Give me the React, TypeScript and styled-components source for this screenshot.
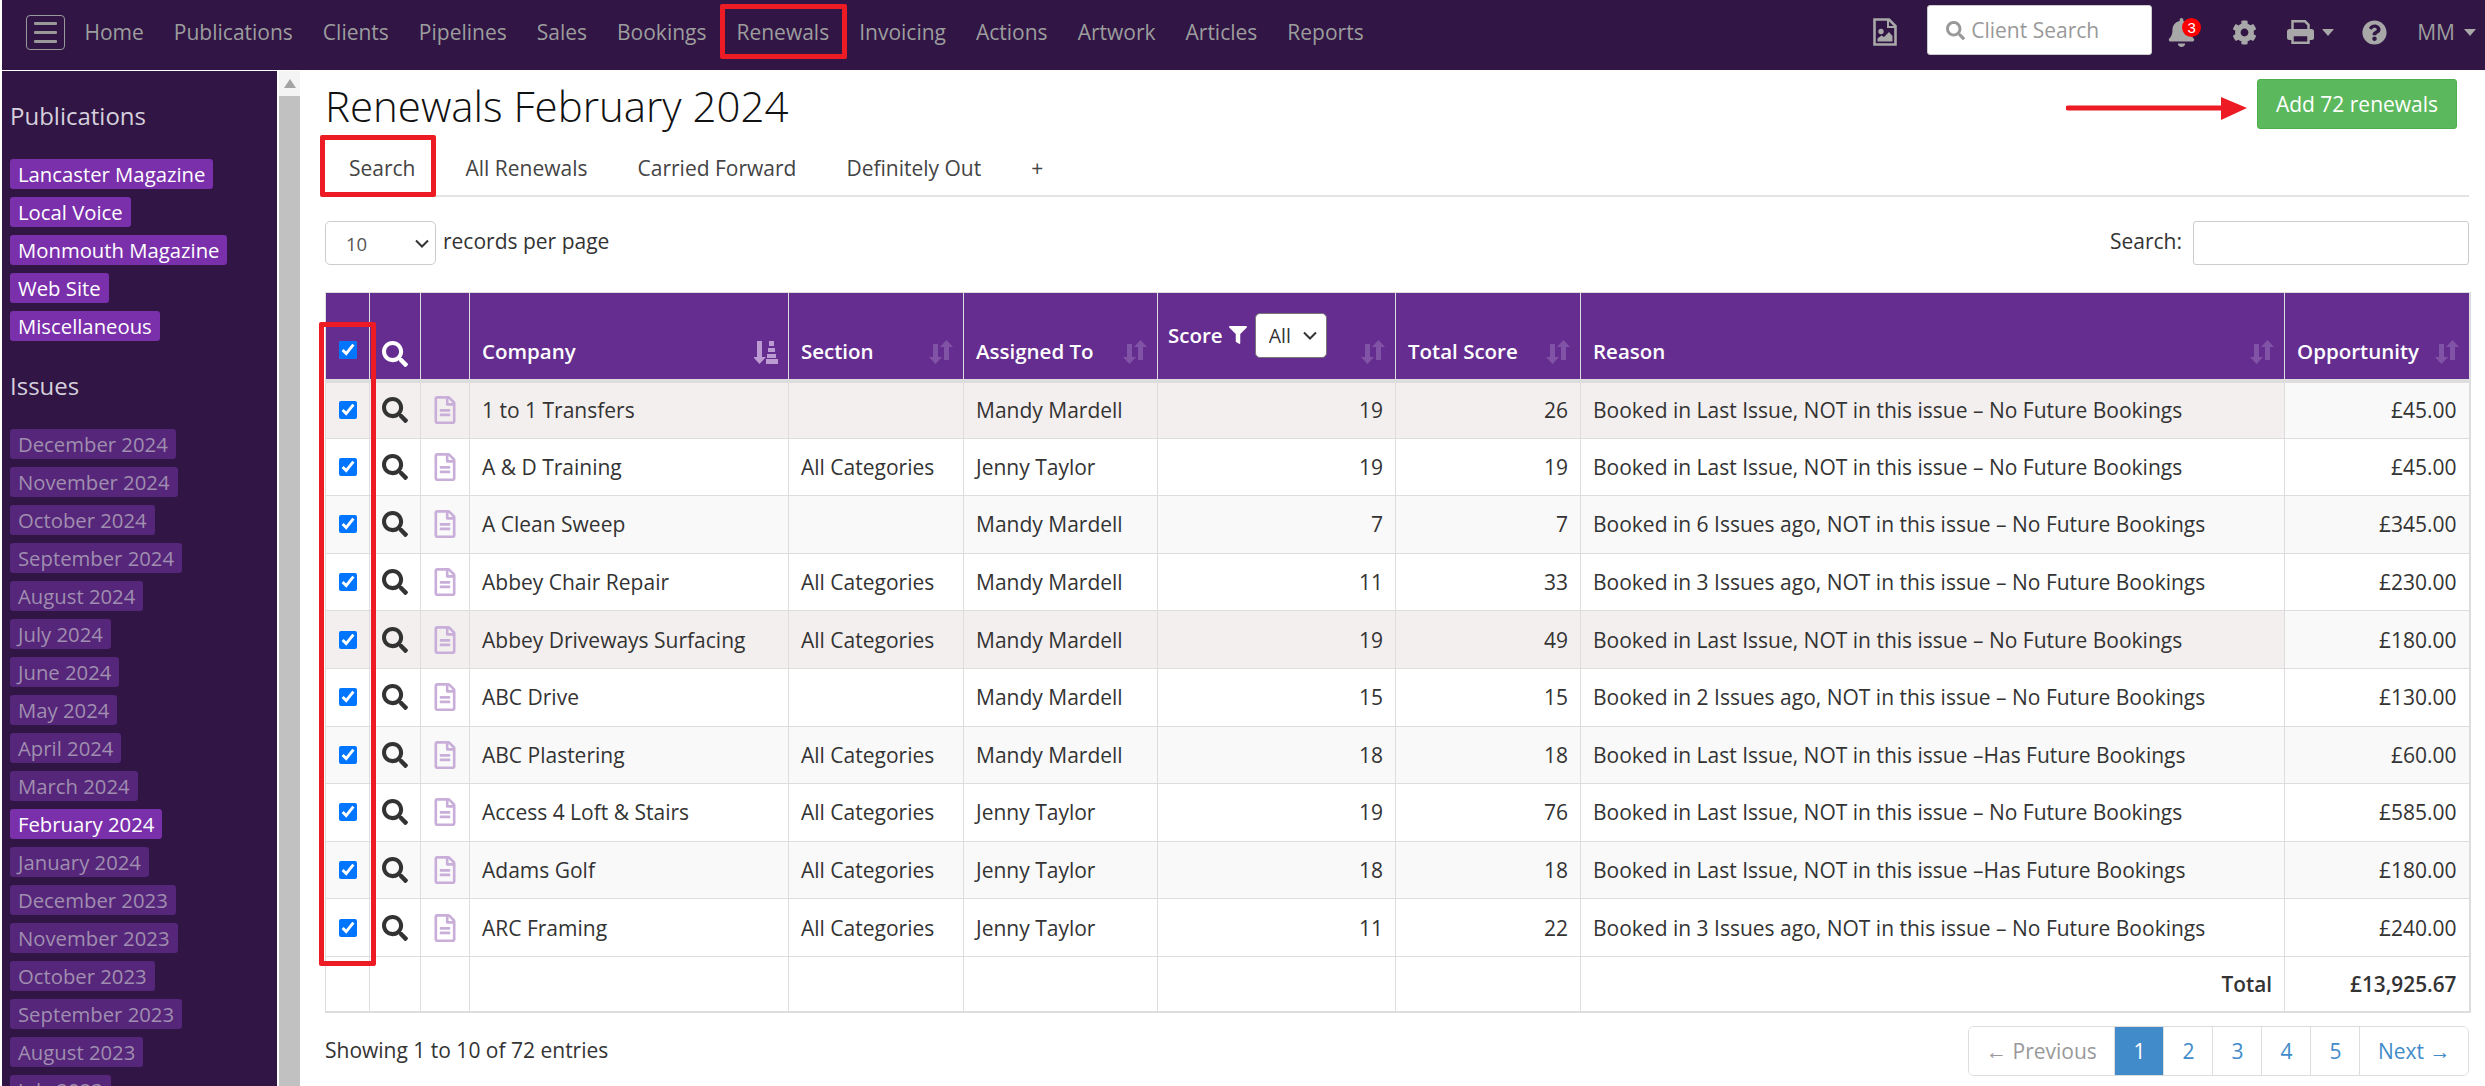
import React from "react";
import styled, { createGlobalStyle } from "styled-components";
import { FaBell, FaCog, FaFilter, FaQuestionCircle, FaRegFileAlt, FaSearch } from "react-icons/fa";

const GlobalStyle = createGlobalStyle`
  html, body {
    margin: 0;
    height: 100%;
    background: #fff;
    overflow: hidden;
  }
  body {
    font-family: "Open Sans", "Liberation Sans", sans-serif;
    font-size: 21px;
    color: #333;
  }
  * { box-sizing: border-box; }
`;

const chevron = `url("data:image/svg+xml,%3Csvg xmlns='http://www.w3.org/2000/svg' viewBox='0 0 14 9'%3E%3Cpath d='M1 1.500l6 6 6-6' fill='none' stroke='%23333' stroke-width='2'/%3E%3C/svg%3E")`;

const navItems = ["Home", "Publications", "Clients", "Pipelines", "Sales", "Bookings", "Renewals", "Invoicing", "Actions", "Artwork", "Articles", "Reports"];
const publications = ["Lancaster Magazine", "Local Voice", "Monmouth Magazine", "Web Site", "Miscellaneous"];
const issues = [
  "December 2024", "November 2024", "October 2024", "September 2024", "August 2024", "July 2024", "June 2024", "May 2024",
  "April 2024", "March 2024", "February 2024", "January 2024", "December 2023", "November 2023", "October 2023",
  "September 2023", "August 2023", "July 2023",
];
const tabs = ["Search", "All Renewals", "Carried Forward", "Definitely Out", "+"];
const columnWidths = [44, 51, 49, 319, 175, 194, 238, 185, 704, 185];

const lastNoFuture = "Booked in Last Issue, NOT in this issue – No Future Bookings";
const lastHasFuture = "Booked in Last Issue, NOT in this issue –Has Future Bookings";
const agoNoFuture = (n: number) => `Booked in ${n} Issues ago, NOT in this issue – No Future Bookings`;

type Tint = "pink" | "grey" | "none";
const rows: { company: string; section: string; assigned: string; score: number; total: number; reason: string; opportunity: string; tint: Tint }[] = [
  { company: "1 to 1 Transfers", section: "", assigned: "Mandy Mardell", score: 19, total: 26, reason: lastNoFuture, opportunity: "£45.00", tint: "pink" },
  { company: "A & D Training", section: "All Categories", assigned: "Jenny Taylor", score: 19, total: 19, reason: lastNoFuture, opportunity: "£45.00", tint: "none" },
  { company: "A Clean Sweep", section: "", assigned: "Mandy Mardell", score: 7, total: 7, reason: agoNoFuture(6), opportunity: "£345.00", tint: "grey" },
  { company: "Abbey Chair Repair", section: "All Categories", assigned: "Mandy Mardell", score: 11, total: 33, reason: agoNoFuture(3), opportunity: "£230.00", tint: "none" },
  { company: "Abbey Driveways Surfacing", section: "All Categories", assigned: "Mandy Mardell", score: 19, total: 49, reason: lastNoFuture, opportunity: "£180.00", tint: "pink" },
  { company: "ABC Drive", section: "", assigned: "Mandy Mardell", score: 15, total: 15, reason: agoNoFuture(2), opportunity: "£130.00", tint: "none" },
  { company: "ABC Plastering", section: "All Categories", assigned: "Mandy Mardell", score: 18, total: 18, reason: lastHasFuture, opportunity: "£60.00", tint: "grey" },
  { company: "Access 4 Loft & Stairs", section: "All Categories", assigned: "Jenny Taylor", score: 19, total: 76, reason: lastNoFuture, opportunity: "£585.00", tint: "none" },
  { company: "Adams Golf", section: "All Categories", assigned: "Jenny Taylor", score: 18, total: 18, reason: lastHasFuture, opportunity: "£180.00", tint: "grey" },
  { company: "ARC Framing", section: "All Categories", assigned: "Jenny Taylor", score: 11, total: 22, reason: agoNoFuture(3), opportunity: "£240.00", tint: "none" },
];

const tintColours: Record<Tint, string> = { pink: "#f4efef", grey: "#f9f9f9", none: "#fff" };

const Page = styled.div`
  position: relative;
  width: 2485px;
  height: 1086px;
  overflow: hidden;
  padding-left: 2px;
  background: #fff;
`;

const NavBar = styled.nav`
  display: flex;
  align-items: center;
  height: 70px;
  padding-bottom: 6px;
  background: #301545;
  color: #9d9d9d;
`;

const MenuToggle = styled.button`
  display: flex;
  flex-direction: column;
  justify-content: center;
  gap: 6px;
  width: 39px;
  height: 35px;
  margin: 0 4.5px 0 24px;
  padding: 0 7px;
  background: none;
  border: 1px solid #999;
  border-radius: 4px;
  span {
    display: block;
    height: 3px;
    border-radius: 1px;
    background: #999;
  }
`;

const NavLink = styled.a`
  padding: 0 15px;
  font-size: 21px;
  white-space: nowrap;
  color: #9d9d9d;
`;

const NavRight = styled.div`
  display: flex;
  align-items: center;
  margin-left: auto;
`;

const NavIcon = styled.span<{ $gap: number; $size?: number }>`
  position: relative;
  display: flex;
  align-items: center;
  margin-right: ${(p) => p.$gap}px;
  font-size: ${(p) => p.$size ?? 25}px;
  color: #a8a8a8;
`;

const ClientSearch = styled.div`
  display: flex;
  align-items: center;
  gap: 6px;
  width: 225px;
  height: 50px;
  margin: -4px 15px 0 30px;
  padding-left: 18px;
  background: #fff;
  border-radius: 3px;
  border: 1px solid #ccc;
  color: #999;
  font-size: 21px;
  svg { font-size: 19px; }
`;

const Badge = styled.span`
  position: absolute;
  top: 0;
  left: 15px;
  width: 19px;
  height: 19px;
  border-radius: 50%;
  background: #f00;
  color: #fff;
  font-family: "Liberation Sans", sans-serif;
  font-size: 15px;
  line-height: 19px;
  text-align: center;
`;

const Caret = styled.span<{ $left: number; $right?: number }>`
  display: inline-block;
  margin-left: ${(p) => p.$left}px;
  margin-right: ${(p) => p.$right ?? 0}px;
  border-top: 7px solid #a8a8a8;
  border-left: 6px solid transparent;
  border-right: 6px solid transparent;
`;

const UserName = styled.span`
  font-size: 21px;
  color: #9d9d9d;
`;

const Layout = styled.div`
  display: flex;
  height: 1015px;
  margin-top: 1px;
`;

const SideBar = styled.aside`
  flex: 0 0 275px;
  height: 100%;
  overflow: hidden;
  padding: 31px 8px 0;
  background: #301545;
`;

const SideHeading = styled.h3<{ $top: number }>`
  margin: ${(p) => p.$top}px 0 29px;
  font-size: 24px;
  font-weight: 400;
  line-height: 28px;
  color: #d6d0dc;
`;

const LabelList = styled.div`
  display: flex;
  flex-direction: column;
  align-items: flex-start;
  gap: 8px;
`;

const SideLabel = styled.a<{ $tone: "bright" | "dim" }>`
  height: 30px;
  padding: 0 8px;
  border-radius: 3px;
  font-size: 20.3px;
  line-height: 30px;
  white-space: nowrap;
  background: ${(p) => (p.$tone === "bright" ? "#7a2fab" : "#552679")};
  color: ${(p) => (p.$tone === "bright" ? "#fff" : "#a08eb0")};
`;

const ScrollTrack = styled.div`
  flex: 0 0 23px;
  padding-left: 2px;
  background: #fff;
`;

const ScrollArrow = styled.div`
  height: 25px;
  display: flex;
  align-items: center;
  justify-content: center;
  background: #f4f4f4;
  &::after {
    content: "";
    border-bottom: 9px solid #a3a3a3;
    border-left: 6px solid transparent;
    border-right: 6px solid transparent;
  }
`;

const ScrollThumb = styled.div`
  height: 100%;
  background: #c1c1c1;
`;

const Main = styled.main`
  flex: 1;
  min-width: 0;
  padding: 8px 16px 0 25px;
`;

const TitleRow = styled.div`
  display: flex;
  justify-content: space-between;
  align-items: flex-start;
  height: 56px;
  padding-right: 12px;
`;

const Title = styled.h1`
  margin: 0;
  font-size: 42px;
  font-weight: 300;
  line-height: 54px;
  color: #111;
`;

const AddButton = styled.button`
  width: 200px;
  height: 50px;
  background: #5cb85c;
  border: 1px solid #4cae4c;
  border-radius: 3px;
  color: #fff;
  font-family: inherit;
  font-size: 21px;
`;

const TabBar = styled.div`
  display: flex;
  gap: 2px;
  height: 62px;
  border-bottom: 2px solid #e4e4e4;
`;

const Tab = styled.a`
  padding: 19px 24px 0;
  font-size: 21px;
  line-height: 28px;
  color: #444;
`;

const Toolbar = styled.div`
  display: flex;
  justify-content: space-between;
  align-items: flex-start;
  height: 44px;
  margin-top: 24px;
`;

const ToolbarGroup = styled.label`
  display: flex;
  align-items: flex-start;
  gap: 7px;
  line-height: 40px;
`;

const LengthSelect = styled.select`
  appearance: none;
  width: 111px;
  height: 44px;
  padding-left: 20px;
  background: #fff ${chevron} no-repeat right 6px center / 14px 9px;
  border: 1px solid #ccc;
  border-radius: 5px;
  font-family: inherit;
  font-size: 18.5px;
  color: #555;
`;

const SearchInput = styled.input`
  width: 276px;
  height: 44px;
  margin-left: 4px;
  border: 1px solid #ccc;
  border-radius: 3px;
`;

const Table = styled.table`
  width: 2144px;
  margin-top: 27px;
  table-layout: fixed;
  border-collapse: collapse;
  border: 1px solid #ddd;
  border-right-width: 2px;
  border-bottom-width: 2px;
`;

const Col = styled.col<{ $width: number }>`
  width: ${(p) => p.$width}px;
`;

const HeadCell = styled.th`
  height: 88px;
  padding: 0 10px 14px 12px;
  vertical-align: bottom;
  text-align: left;
  background: #652d90;
  color: #fff;
  font-size: 20.5px;
  font-weight: 600;
  border: 1px solid #ddd;
  border-top: 0;
  border-bottom: 4px solid #ddd;
`;

const IconHeadCell = styled(HeadCell)<{ $bottom?: number }>`
  padding: 0 0 ${(p) => p.$bottom ?? 0}px;
  text-align: center;
  line-height: 0;
`;

const HeadInner = styled.div`
  display: flex;
  justify-content: space-between;
  align-items: flex-end;
  line-height: 28px;
`;

const ScoreInner = styled.div`
  display: flex;
  align-items: center;
  gap: 6px;
  margin-bottom: -2px;
  white-space: nowrap;
  svg { font-size: 18px; }
`;

const ScoreHead = styled(HeadCell)`
  padding-left: 10px;
`;

const ScoreSelect = styled.select`
  appearance: none;
  width: 72px;
  height: 45px;
  padding-left: 13px;
  margin-bottom: 9px;
  margin-left: 2px;
  background: #fff ${chevron} no-repeat right 9px center / 14px 9px;
  border: 1px solid #777;
  border-radius: 5px;
  font-family: inherit;
  font-size: 19.5px;
  color: #333;
`;

const ScoreLabel = styled.span`
  display: flex;
  align-items: center;
  gap: 6px;
  margin-bottom: 10px;
`;

const SortIconWrap = styled.svg<{ $bright?: boolean }>`
  flex: none;
  width: 24px;
  height: 24px;
  margin-bottom: 1px;
  fill: ${(p) => (p.$bright ? "#bb9bd2" : "#8153a6")};
`;

const Row = styled.tr<{ $tint: Tint }>`
  height: 57.6px;
  background: ${(p) => tintColours[p.$tint]};
`;

const Cell = styled.td<{ $align?: "right" | "center" }>`
  padding: 0 12px;
  border: 1px solid #ddd;
  font-size: 21px;
  white-space: nowrap;
  color: #333;
  text-align: ${(p) => p.$align ?? "left"};
`;

const IconCell = styled(Cell)`
  padding: 0;
  text-align: center;
  line-height: 0;
`;

const OpportunityCell = styled(Cell)<{ $tint: Tint }>`
  text-align: right;
  background: ${(p) => (p.$tint === "none" ? "#fff" : "#f9f9f9")};
`;

const TotalCell = styled(Cell)`
  height: 56px;
  text-align: right;
  font-size: 20.8px;
  font-weight: 600;
  background: #fff;
`;

const Tick = styled.input`
  display: block;
  width: 18px;
  height: 18px;
  margin: 0 auto;
`;

const SearchGlyph = styled(FaSearch)<{ $head?: boolean }>`
  font-size: 26px;
  color: ${(p) => (p.$head ? "#fff" : "#333")};
`;

const DocGlyph = styled(FaRegFileAlt)`
  font-size: 28px;
  color: #c8aed9;
`;

const Footer = styled.div`
  display: flex;
  justify-content: space-between;
  align-items: flex-start;
  margin-top: 13px;
`;

const EntryInfo = styled.div`
  line-height: 50px;
  margin-top: -1px;
`;

const Pager = styled.div`
  display: flex;
  height: 50px;
  border: 1px solid #ddd;
  border-radius: 6px;
  overflow: hidden;
`;

const PagerItem = styled.a<{ $state?: "active" | "disabled"; $pad?: number }>`
  padding: 0 ${(p) => p.$pad ?? 18}px;
  line-height: 48px;
  font-size: 21px;
  border-left: 1px solid #ddd;
  color: ${(p) => (p.$state === "active" ? "#fff" : p.$state === "disabled" ? "#999" : "#428bca")};
  background: ${(p) => (p.$state === "active" ? "#428bca" : "#fff")};
  &:first-child { border-left: 0; }
`;

const RedBox = styled.div<{ $x: number; $y: number; $w: number; $h: number }>`
  position: absolute;
  left: ${(p) => p.$x}px;
  top: ${(p) => p.$y}px;
  width: ${(p) => p.$w}px;
  height: ${(p) => p.$h}px;
  border: 5px solid #ed1c24;
  border-radius: 2px;
  pointer-events: none;
`;

const RedArrow = styled.svg`
  position: absolute;
  left: 2066px;
  top: 96px;
  width: 182px;
  height: 24px;
`;

const SortIcon = () => (
  <SortIconWrap viewBox="0 0 24 24">
    <path d="M4 4h5v13h4l-6.500 7L0 17h4z" />
    <path d="M15 20h5V7h4l-6.500-7L11 7h4z" />
  </SortIconWrap>
);

const SortedIcon = () => (
  <SortIconWrap $bright viewBox="0 0 24 24">
    <path d="M3 1h5v16h4l-6.500 7L-1 17h4z" />
    <path d="M15 1h5v5h-5zM14 8h7v4h-7zM13 14h9v4h-9zM12 19h12v5H12z" />
  </SortIconWrap>
);

const ImageFileIcon = () => (
  <svg width="24" height="28" viewBox="0 0 24 28" fill="#a8a8a8">
    <path d="M1.500 1.500h14.500l6.500 6.500v18.500H1.500z" fill="none" stroke="#a8a8a8" strokeWidth="2.600" />
    <path d="M15 1.500v7.500h7.500" fill="none" stroke="#a8a8a8" strokeWidth="2" />
    <circle cx="8" cy="13.500" r="2.700" />
    <path d="M4.500 23.500v-3l4-3 2.500 1.500 5-5 3.500 4v5.500z" />
  </svg>
);

const PrinterIcon = () => (
  <svg width="27" height="24" viewBox="0 0 27 24">
    <path d="M5.500 11V1.300h12.500l3.500 3.500V11" fill="none" stroke="#a8a8a8" strokeWidth="2.500" />
    <rect x="0" y="9" width="27" height="11" rx="2.500" fill="#a8a8a8" />
    <rect x="5.500" y="15" width="16" height="7.800" fill="#301545" stroke="#a8a8a8" strokeWidth="2.500" />
  </svg>
);

export default function App() {
  return (
    <Page>
      <GlobalStyle />
      <NavBar>
        <MenuToggle>
          <span />
          <span />
          <span />
        </MenuToggle>
        {navItems.map((item) => (
          <NavLink key={item}>{item}</NavLink>
        ))}
        <NavRight>
          <NavIcon $gap={0}>
            <ImageFileIcon />
          </NavIcon>
          <ClientSearch>
            <FaSearch />
            Client Search
          </ClientSearch>
          <NavIcon $gap={36} $size={29}>
            <FaBell />
            <Badge>3</Badge>
          </NavIcon>
          <NavIcon $gap={30}>
            <FaCog />
          </NavIcon>
          <NavIcon $gap={28}>
            <PrinterIcon />
            <Caret $left={8} />
          </NavIcon>
          <NavIcon $gap={30}>
            <FaQuestionCircle />
          </NavIcon>
          <UserName>MM</UserName>
          <Caret $left={9} $right={9} />
        </NavRight>
      </NavBar>
      <Layout>
        <SideBar>
          <SideHeading $top={0}>Publications</SideHeading>
          <LabelList>
            {publications.map((name) => (
              <SideLabel key={name} $tone="bright">
                {name}
              </SideLabel>
            ))}
          </LabelList>
          <SideHeading $top={31}>Issues</SideHeading>
          <LabelList>
            {issues.map((name) => (
              <SideLabel key={name} $tone={name === "February 2024" ? "bright" : "dim"}>
                {name}
              </SideLabel>
            ))}
          </LabelList>
        </SideBar>
        <ScrollTrack>
          <ScrollArrow />
          <ScrollThumb />
        </ScrollTrack>
        <Main>
          <TitleRow>
            <Title>Renewals February 2024</Title>
            <AddButton>Add 72 renewals</AddButton>
          </TitleRow>
          <TabBar>
            {tabs.map((tab) => (
              <Tab key={tab}>{tab}</Tab>
            ))}
          </TabBar>
          <Toolbar>
            <ToolbarGroup>
              <LengthSelect defaultValue="10">
                <option>10</option>
                <option>25</option>
              </LengthSelect>
              records per page
            </ToolbarGroup>
            <ToolbarGroup>
              Search:
              <SearchInput />
            </ToolbarGroup>
          </Toolbar>
          <Table>
            <colgroup>
              {columnWidths.map((width, i) => (
                <Col key={i} $width={width} />
              ))}
            </colgroup>
            <thead>
              <tr>
                <IconHeadCell $bottom={20}>
                  <Tick type="checkbox" defaultChecked />
                </IconHeadCell>
                <IconHeadCell $bottom={12}>
                  <SearchGlyph $head />
                </IconHeadCell>
                <IconHeadCell />
                <HeadCell>
                  <HeadInner>
                    Company
                    <SortedIcon />
                  </HeadInner>
                </HeadCell>
                <HeadCell>
                  <HeadInner>
                    Section
                    <SortIcon />
                  </HeadInner>
                </HeadCell>
                <HeadCell>
                  <HeadInner>
                    Assigned To
                    <SortIcon />
                  </HeadInner>
                </HeadCell>
                <ScoreHead>
                  <HeadInner>
                    <ScoreInner>
                      <ScoreLabel>
                        Score
                        <FaFilter />
                      </ScoreLabel>
                      <ScoreSelect defaultValue="All">
                        <option>All</option>
                      </ScoreSelect>
                    </ScoreInner>
                    <SortIcon />
                  </HeadInner>
                </ScoreHead>
                <HeadCell>
                  <HeadInner>
                    Total Score
                    <SortIcon />
                  </HeadInner>
                </HeadCell>
                <HeadCell>
                  <HeadInner>
                    Reason
                    <SortIcon />
                  </HeadInner>
                </HeadCell>
                <HeadCell>
                  <HeadInner>
                    Opportunity
                    <SortIcon />
                  </HeadInner>
                </HeadCell>
              </tr>
            </thead>
            <tbody>
              {rows.map((row) => (
                <Row key={row.company} $tint={row.tint}>
                  <IconCell>
                    <Tick type="checkbox" defaultChecked />
                  </IconCell>
                  <IconCell>
                    <SearchGlyph />
                  </IconCell>
                  <IconCell>
                    <DocGlyph />
                  </IconCell>
                  <Cell>{row.company}</Cell>
                  <Cell>{row.section}</Cell>
                  <Cell>{row.assigned}</Cell>
                  <Cell $align="right">{row.score}</Cell>
                  <Cell $align="right">{row.total}</Cell>
                  <Cell>{row.reason}</Cell>
                  <OpportunityCell $tint={row.tint}>{row.opportunity}</OpportunityCell>
                </Row>
              ))}
              <tr>
                <Cell />
                <Cell />
                <Cell />
                <Cell />
                <Cell />
                <Cell />
                <Cell />
                <Cell />
                <TotalCell>Total</TotalCell>
                <TotalCell>£13,925.67</TotalCell>
              </tr>
            </tbody>
          </Table>
          <Footer>
            <EntryInfo>Showing 1 to 10 of 72 entries</EntryInfo>
            <Pager>
              <PagerItem $state="disabled" $pad={17.5}>← Previous</PagerItem>
              <PagerItem $state="active">1</PagerItem>
              <PagerItem>2</PagerItem>
              <PagerItem>3</PagerItem>
              <PagerItem>4</PagerItem>
              <PagerItem>5</PagerItem>
              <PagerItem $pad={17.5}>Next →</PagerItem>
            </Pager>
          </Footer>
        </Main>
      </Layout>
      <RedBox $x={720} $y={4} $w={127} $h={55} />
      <RedBox $x={320} $y={135} $w={116} $h={62} />
      <RedBox $x={319} $y={322} $w={57} $h={644} />
      <RedArrow viewBox="0 0 182 24">
        <path d="M2 12h155" stroke="#ed1c24" strokeWidth="5" strokeLinecap="round" />
        <path d="M155 1l26 11-26 12z" fill="#ed1c24" />
      </RedArrow>
    </Page>
  );
}
